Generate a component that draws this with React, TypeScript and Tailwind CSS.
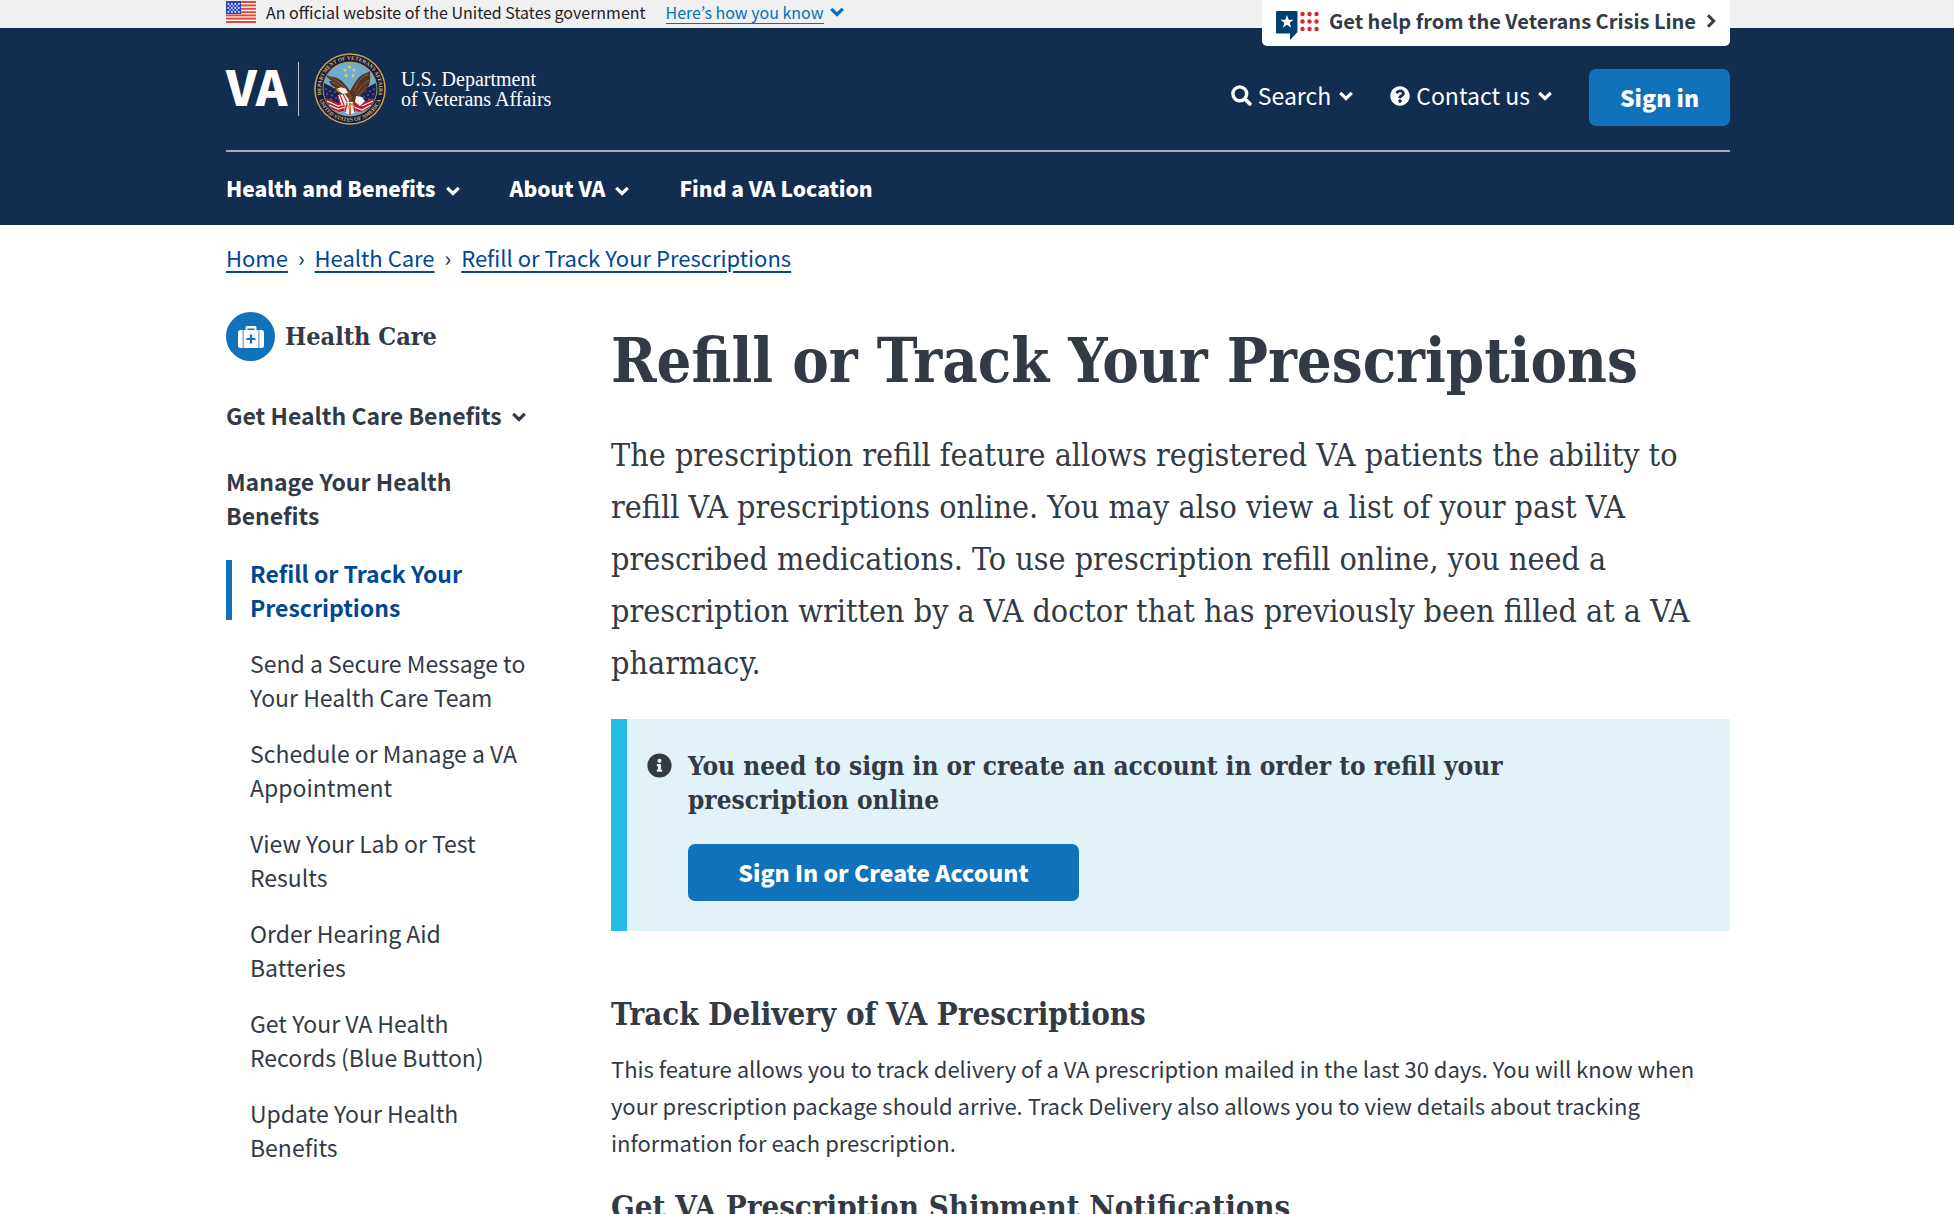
import type { ReactNode } from 'react';
import { FaInfoCircle, FaQuestionCircle } from 'react-icons/fa';

const SLAB = "font-['DejaVu_Serif_Condensed','DejaVu_Serif',serif]";
const STAR = 'M0-1L.24-.32.95-.31.38.12.59.81 0 .4-.59.81-.38.12-.95-.31-.24-.32Z';

const sidebarItems = [
  'Send a Secure Message to Your Health Care Team',
  'Schedule or Manage a VA Appointment',
  'View Your Lab or Test Results',
  'Order Hearing Aid Batteries',
  'Get Your VA Health Records (Blue Button)',
  'Update Your Health Benefits',
];

function Container({ children, className = '' }: { children: ReactNode; className?: string }) {
  return (
    <div className="mx-auto w-full max-w-[1506px] pl-0.5">
      <div className={className}>{children}</div>
    </div>
  );
}

function ChevronDown({ className = '' }: { className?: string }) {
  return (
    <svg viewBox="0 0 14 10" className={`h-2.5 w-3.5 shrink-0 ${className}`} fill="none" stroke="currentColor" strokeWidth="3.200" aria-hidden="true">
      <path d="M1.200 1.800 7 7.500 12.800 1.800" />
    </svg>
  );
}

function ChevronRight() {
  return (
    <svg viewBox="0 0 10 14" className="h-3.5 w-2.5 shrink-0" fill="none" stroke="currentColor" strokeWidth="3" aria-hidden="true">
      <path d="M2 1.200 7.700 7 2 12.800" />
    </svg>
  );
}

function SearchIcon() {
  return (
    <svg viewBox="0 0 21 21" className="size-[21px] shrink-0" fill="none" stroke="currentColor" aria-hidden="true">
      <circle cx="8.800" cy="8.800" r="6.900" strokeWidth="3.400" />
      <path d="M14 14 18.800 18.800" strokeWidth="3.800" strokeLinecap="round" />
    </svg>
  );
}

function UsFlag() {
  return (
    <svg viewBox="0 0 30 22" className="h-[22px] w-[30px] shrink-0" aria-hidden="true">
      <rect width="30" height="22" fill="#fff" />
      {[0, 3.4, 6.8, 10.2, 13.4, 16.6, 20].map((y) => (
        <rect key={y} y={y} width="30" height="2" fill="#dd4b39" />
      ))}
      <rect width="15" height="13" fill="#2b45b8" />
      {[2.2, 6.2, 10.2].map((y) =>
        [1.5, 5, 8.5, 12].map((x) => (
          <rect key={`${x}-${y}`} x={x} y={y} width="1.7" height="1.5" fill="#fff" />
        )),
      )}
      {[4.2, 8.2].map((y) =>
        [3.2, 6.7, 10.2].map((x) => (
          <rect key={`${x}-${y}`} x={x} y={y} width="1.7" height="1.4" fill="#c9d0f2" />
        )),
      )}
    </svg>
  );
}

function CrisisIcon() {
  return (
    <svg viewBox="0 0 43 29" className="h-[29px] w-[43px] shrink-0" aria-hidden="true">
      <path d="M1 0H20.500Q21.500 0 21.500 1V21L14 29V22.500H1Q0 22.500 0 21.500V1Q0 0 1 0Z" fill="#003e73" />
      <path transform="translate(11 11) scale(7)" d={STAR} fill="#fff" />
      {[3, 10.5, 18].map((y) =>
        [26.5, 33.5, 40.5].map((x) => <circle key={`${x}-${y}`} cx={x} cy={y} r="2.2" fill="#d8262f" />),
      )}
    </svg>
  );
}

function VaSeal() {
  return (
    <svg viewBox="0 0 72 72" className="size-[72px] shrink-0" role="img" aria-label="Department of Veterans Affairs seal">
      <defs>
        <path id="seal-top" d="M8.5 45A29 29 0 1 1 63.500 45" />
        <path id="seal-bottom" d="M5 46.500A32.800 32.800 0 0 0 67 46.500" />
        <clipPath id="seal-disc">
          <circle cx="36" cy="36" r="26.500" />
        </clipPath>
      </defs>
      <circle cx="36" cy="36" r="35.800" fill="#c9a54e" />
      <circle cx="36" cy="36" r="34.300" fill="#191840" />
      <circle cx="36" cy="36" r="27.500" fill="#a8915a" />
      <circle cx="36" cy="36" r="26.500" fill="#6fadce" />
      <g fill="#d3bb6c" fontFamily="Liberation Serif, serif" fontSize="5.500" fontWeight="700">
        <text>
          <textPath href="#seal-top" startOffset="50%" textAnchor="middle">DEPARTMENT OF VETERANS AFFAIRS</textPath>
        </text>
        <text>
          <textPath href="#seal-bottom" startOffset="50%" textAnchor="middle">UNITED STATES OF AMERICA</textPath>
        </text>
      </g>
      <g clipPath="url(#seal-disc)">
        {/* crossed flags */}
        <path d="M8 29 18 34 26 40 25 57 17 56 10 47Z" fill="#1b2257" />
        <path d="M64 29 54 34 46 40 47 57 55 56 62 47Z" fill="#1b2257" />
        <path d="M12 45 25 50 36 47 47 50 60 45 58 54 47 59 36 57 25 59 14 54Z" fill="#b3202f" />
        <path d="M13 48 24 53 34 50M48 53 59 48M15 52 24 56 32 54M40 54 48 57 57 52" stroke="#f2eef0" strokeWidth="1.200" fill="none" />
        {[[12, 36], [16, 38], [13, 41], [18, 42], [21, 39], [17, 46], [22, 45], [60, 36], [56, 38], [59, 41], [54, 42], [51, 38], [55, 46], [50, 44]].map(
          ([x, y]) => <circle key={`${x}-${y}`} cx={x} cy={y} r=".6" fill="#dfe4f4" />,
        )}
        {/* wings and body */}
        <path d="M11 20C16 25 20 23 25 26 30 29 33 34 36 38 39 33 43 25 48 22 51 20 53 20 56 18 56 23 57 28 55 32 53 36 50 40 46 43L40 50H33L31 43C26 42 21 39 19 35L22 35C18 33 16 31 15 28L18 28C14 26 12 23 11 20Z" fill="#5a3320" />
        <path d="M14 23C20 27 24 27 31 35M18 29C24 31 28 34 31 38M22 35 31 40M54 21C47 24 43 30 40 38M55 27C49 31 46 34 42 41M52 34C49 37 47 39 44 43" stroke="#8d6244" strokeWidth="1" fill="none" />
        <path d="M34 37 38 44 37 51 33 46Z" fill="#7a4a2c" />
        {/* head and striped shields */}
        <path d="M23 36C25 34 29 34 32 36L34 40 29 41 26 39Z" fill="#f6f2ea" />
        <path d="M22 37 25 36 25 39Z" fill="#e0a82f" />
        <path d="M42 43 48 44 51 48 46 53 41 49Z" fill="#eef3f8" />
        <path d="M24 42 31 41 35 47 33 53 27 52Z" fill="#f4f1f1" />
        <path d="M26 42 30 52M29 41 34 51M24 44 27 52" stroke="#c12a38" strokeWidth="1.200" />
        <path d="M32 49 39 49 42 59 36 62 30 59Z" fill="#f3ecec" />
        <path d="M33 50 31 59M36 50V62M39 50 41 59" stroke="#b3202f" strokeWidth="1.400" />
        <path d="M33 51 35 55 38 51 40 54" stroke="#e0a82f" strokeWidth="1.400" fill="none" />
        {/* constellation */}
        {[[31, 17], [35.5, 14], [40, 17], [32, 22.5], [39, 22.5]].map(([x, y]) => (
          <path key={`${x}-${y}`} transform={`translate(${x} ${y}) scale(2.2)`} d={STAR} fill="#ecd25b" />
        ))}
      </g>
    </svg>
  );
}

function MedicalBag() {
  return (
    <span className="flex size-[49px] shrink-0 items-center justify-center rounded-full bg-[#1072ba]">
      <svg viewBox="0 0 26 22" className="h-[22px] w-[26px]" aria-hidden="true">
        <path d="M7.500 4V1.500Q7.500 0 9 0H17Q18.500 0 18.500 1.500V4H20.500V22H5.500V4Z" fill="#fff" />
        <path d="M9.500 2.500H16.500V4H9.500Z" fill="#1072ba" />
        <path d="M2.500 4H4.700V22H2.500Q0 22 0 19.500V6.500Q0 4 2.500 4ZM21.300 4H23.500Q26 4 26 6.500V19.500Q26 22 23.500 22H21.300Z" fill="#fff" />
        <path d="M11.900 8.500H14.100V11.900H17.500V14.100H14.100V17.500H11.900V14.100H8.500V11.900H11.900Z" fill="#1072ba" />
      </svg>
    </span>
  );
}

function GovBanner() {
  return (
    <div className="bg-[#f0f0f0]">
      <Container className="relative flex h-7 items-center pb-1 text-[16px] text-[#212121]">
        <UsFlag />
        <p className="ml-2.5 leading-6">An official website of the United States government</p>
        <button type="button" className="ml-5 flex items-center gap-1.5 leading-6 text-[#0071bb]">
          <span className="border-b border-[#0071bb] leading-[22px]">Here’s how you know</span>
          <ChevronDown />
        </button>
        <button
          type="button"
          className="absolute top-0 right-0 z-10 flex h-[46px] items-center gap-2.5 rounded-b-[5px] bg-white px-[14px] pb-1 text-[20px] font-bold text-[#323a45]"
        >
          <span className="pt-2">
            <CrisisIcon />
          </span>
          <span>Get help from the Veterans Crisis Line</span>
          <ChevronRight />
        </button>
      </Container>
    </div>
  );
}

function Header() {
  return (
    <header className="bg-[#112e51] text-white">
      <Container>
        <div className="flex items-start justify-between border-b-2 border-[#a3abbb] pb-6">
          <a href="#home" className="flex items-center pt-[25px]">
            <span className="w-[60px] pb-2 text-[48px] leading-[54px] font-black">VA</span>
            <span className="mr-[15px] ml-3 h-[54px] w-px bg-[#b9c2cd]" />
            <VaSeal />
            <span className="ml-[15px] font-['Liberation_Serif',serif] text-[20px] leading-5">
              U.S. Department
              <br />
              of Veterans Affairs
            </span>
          </a>
          <div className="flex items-center pt-[41px] text-[23px]">
            <button type="button" className="flex items-center gap-1.5 pb-1">
              <SearchIcon />
              Search
              <ChevronDown className="ml-0.5" />
            </button>
            <button type="button" className="ml-[37px] flex items-center gap-1.5 pb-1">
              <FaQuestionCircle size={20} />
              Contact us
              <ChevronDown className="ml-0.5" />
            </button>
            <button
              type="button"
              className="ml-[37px] h-[57px] w-[141px] rounded-[7px] bg-[#1072ba] text-[23px] font-black"
            >
              Sign in
            </button>
          </div>
        </div>
        <nav className="flex h-[73px] items-center gap-[50px] text-[21px] font-black">
          <button type="button" className="flex items-center gap-2.5">
            Health and Benefits
            <ChevronDown className="mt-1" />
          </button>
          <button type="button" className="flex items-center gap-2.5">
            About VA
            <ChevronDown className="mt-1" />
          </button>
          <a href="#locations">Find a VA Location</a>
        </nav>
      </Container>
    </header>
  );
}

function Breadcrumb() {
  const crumbs = ['Home', 'Health Care', 'Refill or Track Your Prescriptions'];
  return (
    <nav aria-label="Breadcrumb" className="pt-4">
      <ol className="flex items-center text-[22px] leading-8 text-[#004795]">
        {crumbs.map((crumb, i) => (
          <li key={crumb} className="flex">
            {i > 0 && <span className="px-2.5 text-[#112e51]">›</span>}
            <a href="#crumb" className="underline decoration-2 underline-offset-4">
              {crumb}
            </a>
          </li>
        ))}
      </ol>
    </nav>
  );
}

function Sidebar() {
  return (
    <aside className="text-[23px] leading-[34px]">
      <div className="flex items-center gap-2.5">
        <MedicalBag />
        <h2 className={`${SLAB} text-[25px] font-bold`}>Health Care</h2>
      </div>
      <button type="button" className="mt-[37px] flex items-center gap-2.5 font-bold">
        Get Health Care Benefits
        <ChevronDown className="mt-1" />
      </button>
      <h3 className="mt-8 font-bold">Manage Your Health Benefits</h3>
      <ul className="mt-6 flex flex-col gap-[22px]">
        <li className="flex font-bold text-[#004795]">
          <span className="my-1 mr-[18px] w-1.5 shrink-0 bg-[#1072ba]" />
          <a href="#refill">Refill or Track Your Prescriptions</a>
        </li>
        {sidebarItems.map((item) => (
          <li key={item} className="pl-6">
            <a href="#item">{item}</a>
          </li>
        ))}
      </ul>
    </aside>
  );
}

function Main() {
  return (
    <main className={SLAB}>
      <h1 className="mt-[13px] text-[61px] leading-[72px] font-bold">Refill or Track Your Prescriptions</h1>
      <p className="mt-8 text-[32px] leading-[52px]">
        The prescription refill feature allows registered VA patients the ability to refill VA prescriptions online. You
        may also view a list of your past VA prescribed medications. To use prescription refill online, you need a
        prescription written by a VA doctor that has previously been filled at a VA pharmacy.
      </p>
      <section className="mt-[30px] flex items-start gap-4 border-l-[16px] border-[#22bce5] bg-[#e1f3f8] py-[30px] pr-24 pl-5">
        <FaInfoCircle size={25} className="mt-1 shrink-0" />
        <div>
          <h2 className="text-[26px] leading-[34px] font-bold">
            You need to sign in or create an account in order to refill your prescription online
          </h2>
          <button
            type="button"
            className="mt-[27px] h-[57px] w-[391px] rounded-[7px] bg-[#1072ba] font-['Noto_Sans_CJK_KR',sans-serif] text-[23px] font-black text-white"
          >
            Sign In or Create Account
          </button>
        </div>
      </section>
      <h2 className="mt-[65px] text-[31px] leading-9 font-bold">Track Delivery of VA Prescriptions</h2>
      <p className="mt-[18px] font-['Noto_Sans_CJK_KR',sans-serif] text-[22px] leading-[37px]">
        This feature allows you to track delivery of a VA prescription mailed in the last 30 days. You will know when
        your prescription package should arrive. Track Delivery also allows you to view details about tracking
        information for each prescription.
      </p>
      <h2 className="mt-7 text-[31px] leading-9 font-bold">Get VA Prescription Shipment Notifications</h2>
    </main>
  );
}

export default function App() {
  return (
    <div className="min-h-screen bg-white font-['Noto_Sans_CJK_KR',sans-serif] text-[#323a45]">
      <GovBanner />
      <Header />
      <Container>
        <Breadcrumb />
        <div className="grid grid-cols-[310px_1fr] gap-x-[75px] pt-[39px]">
          <Sidebar />
          <Main />
        </div>
      </Container>
    </div>
  );
}
